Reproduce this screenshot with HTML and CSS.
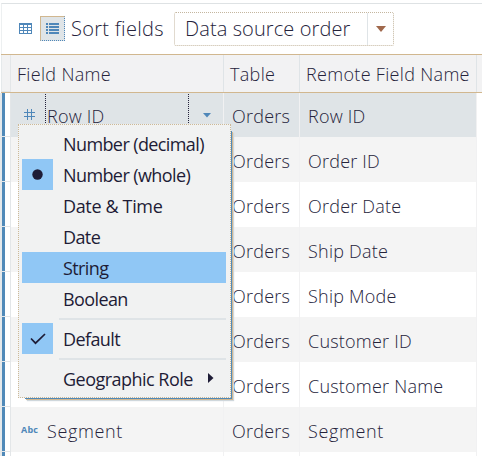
FILE: index.html
```html
<!DOCTYPE html>
<html lang="en">
<head>
<meta charset="utf-8">
<title>Data source fields</title>
<link rel="stylesheet" href="styles.css">
</head>
<body>
<div class="pane">
  <header class="toolbar">
    <svg class="grid-icon" width="13" height="11" viewBox="0 0 13 11" shape-rendering="crispEdges"><path fill="#4f87b9" d="M0 0h13v11H0z"/><path fill="#fff" d="M1 2h3v2H1zM5 2h3v2H5zM9 2h3v2H9zM1 5h3v2H1zM5 5h3v2H5zM9 5h3v2H9zM1 8h3v2H1zM5 8h3v2H5zM9 8h3v2H9z"/></svg>
    <span class="list-button"><svg width="13" height="12" viewBox="0 0 13 12" shape-rendering="crispEdges"><path fill="#4f87b9" d="M0 0h2v2H0zM3 0h10v2H3zM0 3h2v2H0zM3 3h10v2H3zM0 6h2v2H0zM3 6h10v2H3zM0 9h2v2H0zM3 9h10v2H3z"/></svg></span>
    <span class="sort-label">Sort fields</span>
    <div class="select"><span class="select-value">Data source order</span><span class="select-arrow"><svg width="10" height="6" viewBox="0 0 10 6"><path fill="#a0684c" d="M0 0h10L5 6z"/></svg></span></div>
  </header>
  <div class="row head"><span class="gutter"></span><span class="cell name">Field Name</span><span class="cell table">Table</span><span class="cell remote">Remote Field Name</span></div>
  <div class="row selected"><span class="gutter"></span><span class="cell name"><svg class="hash" width="11" height="11" viewBox="0 0 11 11"><path fill="none" stroke="#4f87b9" d="M3.5 0v11M7.5 0v11M0 3.5h11M0 7.5h11"/></svg><span class="editor"><span class="field">Row ID</span></span><svg class="caret" width="8" height="5" viewBox="0 0 8 5"><path fill="#4f87b9" d="M0 0h8L4 4.500z"/></svg></span><span class="cell table">Orders</span><span class="cell remote">Row ID</span></div>
  <div class="row odd"><span class="gutter"></span><span class="cell name"></span><span class="cell table">Orders</span><span class="cell remote">Order ID</span></div>
  <div class="row"><span class="gutter"></span><span class="cell name"></span><span class="cell table">Orders</span><span class="cell remote">Order Date</span></div>
  <div class="row odd"><span class="gutter"></span><span class="cell name"></span><span class="cell table">Orders</span><span class="cell remote">Ship Date</span></div>
  <div class="row"><span class="gutter"></span><span class="cell name"></span><span class="cell table">Orders</span><span class="cell remote">Ship Mode</span></div>
  <div class="row odd"><span class="gutter"></span><span class="cell name"></span><span class="cell table">Orders</span><span class="cell remote">Customer ID</span></div>
  <div class="row"><span class="gutter"></span><span class="cell name"></span><span class="cell table">Orders</span><span class="cell remote">Customer Name</span></div>
  <div class="row odd"><span class="gutter"></span><span class="cell name"><span class="abc">Abc</span><span class="wide">Segment</span></span><span class="cell table">Orders</span><span class="cell remote wide">Segment</span></div>
  <div class="row"><span class="gutter"></span><span class="cell name"></span><span class="cell table"></span><span class="cell remote"></span></div>

  <div class="menu">
    <div class="item"><span class="mark"></span>Number (decimal)</div>
    <div class="item"><span class="mark on"><svg width="11" height="11" viewBox="0 0 11 11"><circle cx="5.500" cy="5.500" r="5.200" fill="#1e1c36"/></svg></span>Number (whole)</div>
    <div class="item"><span class="mark"></span><span class="date-time">Date &amp; Time</span></div>
    <div class="item"><span class="mark"></span>Date</div>
    <div class="item active"><span class="mark"></span>String</div>
    <div class="item"><span class="mark"></span>Boolean</div>
    <div class="rule"></div>
    <div class="item"><span class="mark on"><svg width="16" height="12" viewBox="0 0 16 12"><path fill="none" stroke="#1e1c36" stroke-width="1.700" d="M1 5.500l4.500 4.700L15 1"/></svg></span>Default</div>
    <div class="rule"></div>
    <div class="item role"><span class="mark"></span>Geographic Role<svg class="more" width="6" height="10" viewBox="0 0 6 10"><path fill="#1e1c36" d="M0 0l5.500 5L0 10z"/></svg></div>
  </div>
</div>
</body>
</html>
```
FILE: styles.css
```css
* { box-sizing: border-box; }
body { margin: 0; overflow: hidden; background: #fff; }
.pane {
  position: relative;
  width: 482px;
  height: 456px;
  overflow: hidden;
  padding-top: 3px;
  font-family: "Open Sans", "Noto Sans", sans-serif;
  font-weight: 300;
  font-size: 18px;
  letter-spacing: 0.22px;
  color: #25233b;
  white-space: nowrap;
}
.pane svg { display: block; flex: none; }
.toolbar {
  display: flex;
  align-items: center;
  height: 51px;
  margin-left: 1px;
  padding: 0 0 1px 17px;
  border-top: 1px solid #dee2e4;
  border-left: 1px solid #edf0f1;
}
.grid-icon { margin-right: 8px; }
.list-button {
  display: flex;
  align-items: center;
  justify-content: center;
  width: 25px;
  height: 25px;
  border: 1px dotted #4f87b9;
  border-top: 1px solid #d1b78f;
  border-left: 1px solid #d1b78f;
  background: #dfe4e7;
}
.sort-label { width: 92px; margin-left: 6px; font-size: 20px; letter-spacing: 0.3px; }
.select {
  display: flex;
  width: 220px;
  height: 34px;
  margin-left: 11px;
  border: 1px dotted #c4b69f;
  border-radius: 2px;
  font-size: 20px;
  letter-spacing: 0.1px;
  line-height: 31px;
}
.select-value { width: 193px; padding-left: 10px; border-right: 1px solid #dfe4e7; }
.select-arrow { display: flex; flex: 1; align-items: center; justify-content: center; }
.row { display: flex; height: 45px; }
.gutter {
  width: 11px;
  border-left: 2px solid #e5e9eb;
  border-right: 1px solid #e3e6e8;
  border-bottom: 1px solid #e3e6e8;
  background: linear-gradient(90deg, #5089b8 3px, #fff 3px);
}
.cell {
  display: flex;
  align-items: center;
  border-right: 1px solid #f1f1f2;
  padding-top: 2px;
}
.name { width: 213px; }
.table { width: 76px; padding-left: 8px; }
.remote { width: 177px; padding-left: 8px; }
.wide { letter-spacing: 0.65px; }
.odd .cell { background: #f4f4f4; }
.head {
  height: 39px;
  margin-left: 1px;
  border-top: 1px solid #d1b78f;
  border-bottom: 1px solid #d1b78f;
  background: #f2f2f3;
  letter-spacing: 0.32px;
}
.head .gutter { width: 10px; border-left: 1px solid #e5e9eb; background: #f2f2f3; }
.head .cell { border-color: #dfe4e7; padding-top: 1px; }
.head .name { padding-left: 6px; }
.head .table { padding-left: 6px; }
.head .remote { padding-left: 6px; }
.selected { height: 44px; }
.selected .cell { background: #dfe4e7; }
.hash { margin: -4px 0 0 13px; }
.editor {
  display: flex;
  align-items: center;
  align-self: stretch;
  width: 144px;
  margin: -1px 0 0 10px;
  padding-left: 1px;
  border-left: 1px dotted #25233b;
  border-right: 1px dotted #25233b;
}
.caret { margin: -2px 0 0 14px; }
.abc {
  width: 26px;
  margin: -3px 0 0 10px;
  font-size: 9px;
  font-weight: 700;
  color: #4f87b9;
}
.menu {
  position: absolute;
  left: 18px;
  top: 124px;
  width: 213px;
  height: 274px;
  padding: 3px;
  border: 1px dotted #cdb997;
  background: #f1f2f2;
  box-shadow: 4px 4px 0 -3px #5089b8, 5px 5px 0 -3px #d1b78f, 6px 6px 1px -3px #cfd7dc;
  color: #1e1c36;
  font-weight: 400;
  letter-spacing: -0.6px;
}
.item { display: flex; align-items: center; height: 31px; width: 204px; }
.item.active { background: #90c7f5; }
.item.role { letter-spacing: -0.52px; }
.date-time { letter-spacing: -0.35px; }
.mark {
  display: flex;
  align-items: center;
  justify-content: center;
  width: 31px;
  height: 31px;
  margin-right: 10px;
}
.mark.on { background: #90c7f5; }
.rule { height: 2px; margin: 4px 0 3px 37px; width: 167px; background: #dfe4e7; }
.more { margin: -2px 12px 0 auto; }
```
